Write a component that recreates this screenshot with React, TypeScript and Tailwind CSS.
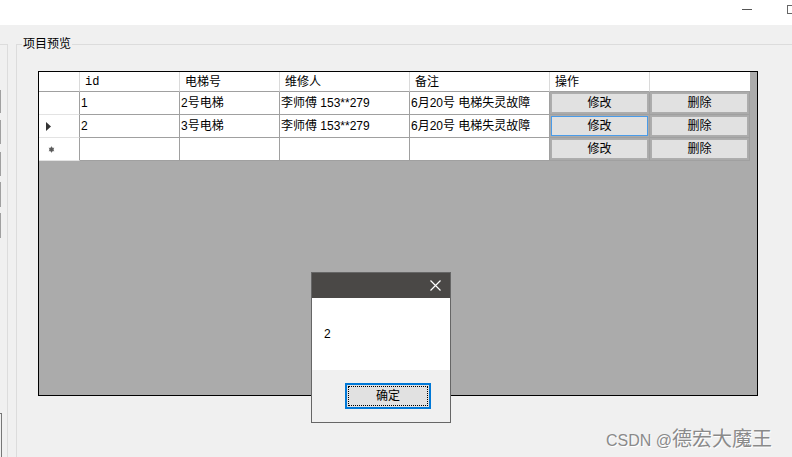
import React from "react";

const cols = [
  { w: "w-[100px]", key: "id" },
  { w: "w-[100px]", key: "no" },
  { w: "w-[130px]", key: "person" },
  { w: "w-[140px]", key: "note" },
];

const rows = [
  { id: "1", no: "2号电梯", person: "李师傅 153**279", note: "6月20号 电梯失灵故障", mark: "none" },
  { id: "2", no: "3号电梯", person: "李师傅 153**279", note: "6月20号 电梯失灵故障", mark: "arrow" },
  { id: "", no: "", person: "", note: "", mark: "star" },
];

function CellButton({ label, focused }: { label: string; focused?: boolean }) {
  return (
    <div className="w-[100px] h-full border-r border-b border-[#a0a0a0] p-px">
      <div
        className={
          focused
            ? "w-full h-full bg-[#e1e1e1] border border-[#4a9be8] flex items-center justify-center"
            : "w-full h-full bg-[#e1e1e1] border border-[#adadad] flex items-center justify-center"
        }
      >
        {label}
      </div>
    </div>
  );
}

export default function App() {
  return (
    <div className="w-[792px] h-[457px] bg-[#f0f0f0] relative overflow-hidden font-['Liberation_Sans','Noto_Sans_CJK_SC',sans-serif] text-[12px] text-black">
      {/* title strip */}
      <div className="h-[25px] bg-white flex items-start justify-end">
        <div className="mt-[9px] w-[10px] h-px bg-[#555] mr-[35px]" />
        <div className="mt-[5px] w-[9px] h-[9px] border border-[#666] -mr-[4px] shrink-0" />
      </div>

      <div className="flex h-[432px]">
        {/* left cut-off groupbox */}
        <div className="w-[8px] mt-[19px] border-t border-r border-[#dcdcdc] flex flex-col shrink-0">
          <div className="mt-[45px] w-px h-[23px] bg-[#a0a0a0]" />
          <div className="mt-[7px] w-px h-[24px] bg-[#a0a0a0]" />
          <div className="mt-[8px] w-px h-[24px] bg-[#a0a0a0]" />
          <div className="mt-[6px] w-px h-[25px] bg-[#a0a0a0]" />
          <div className="mt-[6px] w-px h-[25px] bg-[#a0a0a0]" />
          <div className="mt-[175px] w-[2px] flex-1 border-t border-r border-[#777]" />
        </div>

        {/* 项目预览 groupbox */}
        <div className="ml-[8px] flex-1 mt-[19px] border-t border-l border-[#dcdcdc] flex flex-col">
          <div className="-mt-[9px] ml-[5px] px-px w-fit bg-[#f0f0f0] leading-[16px] text-[12px]">项目预览</div>

          {/* grid */}
          <div className="mt-[19px] ml-[21px] w-[720px] h-[325px] border border-black bg-[#ababab] flex flex-col">
            {/* header */}
            <div className="flex h-[20px]">
              <div className="w-[41px] h-full bg-white border-r border-b border-r-[#dadada] border-b-[#a0a0a0]" />
              <div className="w-[100px] h-full bg-white border-r border-b border-r-[#dadada] border-b-[#a0a0a0] pl-[5px] flex items-center font-['Liberation_Mono','Noto_Sans_CJK_SC',monospace]">id</div>
              <div className="w-[100px] h-full bg-white border-r border-b border-r-[#dadada] border-b-[#a0a0a0] pl-[5px] flex items-center">电梯号</div>
              <div className="w-[130px] h-full bg-white border-r border-b border-r-[#dadada] border-b-[#a0a0a0] pl-[5px] flex items-center">维修人</div>
              <div className="w-[140px] h-full bg-white border-r border-b border-r-[#dadada] border-b-[#a0a0a0] pl-[5px] flex items-center">备注</div>
              <div className="w-[100px] h-full bg-white border-r border-b border-r-[#dadada] border-b-[#a0a0a0] pl-[5px] flex items-center">操作</div>
              <div className="w-[100px] h-full bg-white border-b border-[#a0a0a0]" />
            </div>

            {rows.map((r, i) => (
              <div key={i} className="flex h-[23px]">
                <div className="w-[41px] h-full bg-white border-r border-b border-r-[#a0a0a0] border-b-[#e3e3e3] flex items-center">
                  {r.mark === "arrow" && (
                    <svg width="6" height="9" viewBox="0 0 6 9" className="ml-[7px]">
                      <polygon points="0,0 5,4.5 0,9" fill="#333" />
                    </svg>
                  )}
                  {r.mark === "star" && (
                    <svg width="7" height="7" viewBox="0 0 7 7" className="ml-[9px] mt-[1px]">
                      <circle cx="3.5" cy="3.5" r="2.2" fill="#6a6a6a" />
                      <path d="M3.5 0.5V6.5M0.9 2L6.1 5M6.1 2L0.9 5" stroke="#555" strokeWidth="0.8" />
                    </svg>
                  )}
                </div>
                {cols.map((c) => (
                  <div
                    key={c.key}
                    className={`${c.w} h-full bg-white border-r border-b border-[#a0a0a0] pl-px flex items-center whitespace-nowrap overflow-hidden`}
                  >
                    {(r as Record<string, string>)[c.key]}
                  </div>
                ))}
                <CellButton label="修改" focused={i === 1} />
                <CellButton label="删除" />
              </div>
            ))}
          </div>
        </div>
      </div>

      {/* message box */}
      <div className="absolute left-[311px] top-[272px] w-[140px] h-[151px] border border-[#666] flex flex-col">
        <div className="h-[25px] bg-[#4a4846] flex items-center justify-end pr-[9px]">
          <svg width="11" height="11" viewBox="0 0 11 11">
            <path d="M0.5 0.5L10.5 10.5M10.5 0.5L0.5 10.5" stroke="#fff" strokeWidth="1.2" />
          </svg>
        </div>
        <div className="h-[72px] bg-white flex items-center pl-[12px] text-[12px]">2</div>
        <div className="flex-1 bg-[#f0f0f0]">
          <div className="ml-[33px] mt-[13px] w-[86px] h-[26px] border-2 border-[#0078d7] bg-[#e1e1e1] p-px">
            <div className="w-full h-full border border-dotted border-black flex items-center justify-center text-[12px]">确定</div>
          </div>
        </div>
      </div>

      {/* watermark */}
      <div className="absolute left-[606px] top-[426px] flex items-baseline text-[#8a8a8a] [text-shadow:1px_1px_0_#ffffff] whitespace-nowrap">
        <span className="text-[16px] font-['Liberation_Sans',sans-serif]">CSDN @</span>
        <span className="text-[20px] font-['Noto_Sans_CJK_SC',sans-serif] leading-[23px]">德宏大魔王</span>
      </div>
    </div>
  );
}
